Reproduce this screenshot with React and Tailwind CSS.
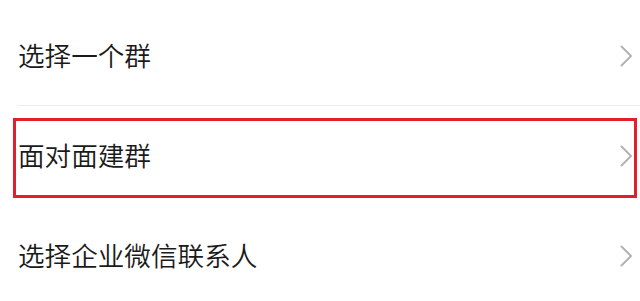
import React from "react";

function Chevron() {
  return (
    <svg width="13" height="22" viewBox="0 0 13 22" className="shrink-0">
      <path d="M1.5 1.5 L11 11 L1.5 20.5" fill="none" stroke="#b3b3b3" strokeWidth="2" strokeLinecap="round" strokeLinejoin="round" />
    </svg>
  );
}

function Row({ label, divider }) {
  return (
    <div className="flex flex-col">
      <div className="flex items-center justify-between h-[99px] pl-[18px] pr-[7px]">
        <span className="text-[26.6px] font-[350] leading-none text-[#1a1a1a]">{label}</span>
        <Chevron />
      </div>
      {divider ? <div className="ml-[17px] h-px bg-[#ececec]" /> : <div className="h-px" />}
    </div>
  );
}

export default function App() {
  return (
    <div
      className="relative w-[640px] h-[301px] overflow-hidden bg-white pt-[6px]"
      style={{ fontFamily: '"Noto Sans CJK SC", "Noto Sans", sans-serif' }}
    >
      <Row label="选择一个群" divider />
      <Row label="面对面建群" />
      <Row label="选择企业微信联系人" />
      <div className="absolute left-[13px] top-[118px] w-[624px] h-[80px] border-[3px] border-[#e0202c]" />
    </div>
  );
}
